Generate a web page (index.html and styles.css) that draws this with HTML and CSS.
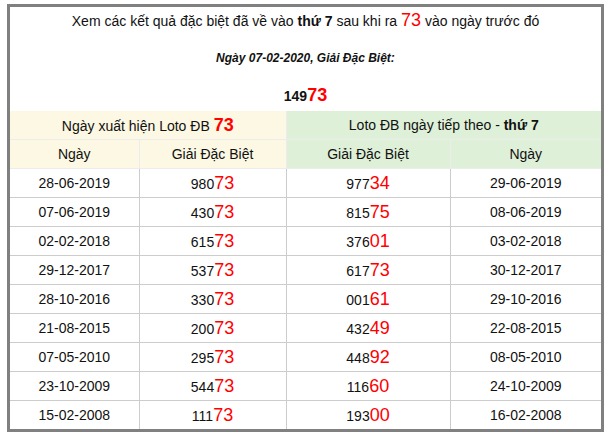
FILE: index.html
```html
<!DOCTYPE html>
<html>
<head>
<meta charset="utf-8">
<link rel="stylesheet" href="styles.css">
</head>
<body>
<div class="box">
  <div class="title">Xem các kết quả đặc biệt đã về vào <b>thứ 7</b> sau khi ra <span class="red big">73</span> vào ngày trước đó</div>
  <div class="sub">Ngày 07-02-2020, Giải Đặc Biệt:</div>
  <div class="num">149<span class="red numbig">73</span></div>
  <table class="tbl">
    <colgroup>
      <col class="c1"><col class="c2"><col class="c3"><col class="c4">
    </colgroup>
    <tr class="h">
      <td colspan="2" class="cream">Ngày xuất hiện Loto ĐB <b class="red hbig">73</b></td>
      <td colspan="2" class="green">Loto ĐB ngày tiếp theo - <b>thứ 7</b></td>
    </tr>
    <tr class="h">
      <td class="cream">Ngày</td>
      <td class="cream">Giải Đặc Biệt</td>
      <td class="green">Giải Đặc Biệt</td>
      <td class="green">Ngày</td>
    </tr>
    <tr><td>28-06-2019</td><td>980<span class="red big">73</span></td><td>977<span class="red big">34</span></td><td>29-06-2019</td></tr>
    <tr><td>07-06-2019</td><td>430<span class="red big">73</span></td><td>815<span class="red big">75</span></td><td>08-06-2019</td></tr>
    <tr><td>02-02-2018</td><td>615<span class="red big">73</span></td><td>376<span class="red big">01</span></td><td>03-02-2018</td></tr>
    <tr><td>29-12-2017</td><td>537<span class="red big">73</span></td><td>617<span class="red big">73</span></td><td>30-12-2017</td></tr>
    <tr><td>28-10-2016</td><td>330<span class="red big">73</span></td><td>001<span class="red big">61</span></td><td>29-10-2016</td></tr>
    <tr><td>21-08-2015</td><td>200<span class="red big">73</span></td><td>432<span class="red big">49</span></td><td>22-08-2015</td></tr>
    <tr><td>07-05-2010</td><td>295<span class="red big">73</span></td><td>448<span class="red big">92</span></td><td>08-05-2010</td></tr>
    <tr><td>23-10-2009</td><td>544<span class="red big">73</span></td><td>116<span class="red big">60</span></td><td>24-10-2009</td></tr>
    <tr><td>15-02-2008</td><td>111<span class="red big">73</span></td><td>193<span class="red big">00</span></td><td>16-02-2008</td></tr>
  </table>
</div>
</body>
</html>
```
FILE: styles.css
```css
html, body { margin: 0; padding: 0; background: #fff; }
body { font-family: "Liberation Sans", Arial, sans-serif; font-size: 14px; color: #222; }
.box {
  margin: 4px 0 0 7px;
  width: 591px;
  border: 3px solid #808080;
}
.red { color: #ff0000; }
.big { font-size: 18px; }
.title { text-align: center; line-height: 20px; margin-top: 3px; color: #111; }
.sub { text-align: center; line-height: 20px; margin-top: 17px; font-weight: bold; font-style: italic; font-size: 12px; color: #111; }
.num { text-align: center; line-height: 20px; margin-top: 17px; font-weight: bold; font-size: 14px; color: #111; }
.numbig { font-size: 18px; font-weight: bold; }
.tbl {
  margin-top: 5px;
  width: 100%;
  border-collapse: collapse;
  table-layout: fixed;
}
.c1 { width: 129px; }
.c2 { width: 147px; }
.c3 { width: 164px; }
.c4 { width: 151px; }
.tbl td {
  border: 1px solid #cccccc;
  height: 28px;
  padding: 0;
  text-align: center;
  vertical-align: middle;
  line-height: 20px;
  color: #111;
}
.tbl tr:first-child td { border-top: 0; }
.tbl tr td:first-child { border-left: 0; }
.tbl tr td:last-child { border-right: 0; }
.tbl tr:last-child td { border-bottom: 0; }
.tbl tr.h td { border-color: #ececec; }
.cream { background: #fcf8e3; }
.green { background: #dff0d8; }
.hbig { font-size: 18px; }
```
